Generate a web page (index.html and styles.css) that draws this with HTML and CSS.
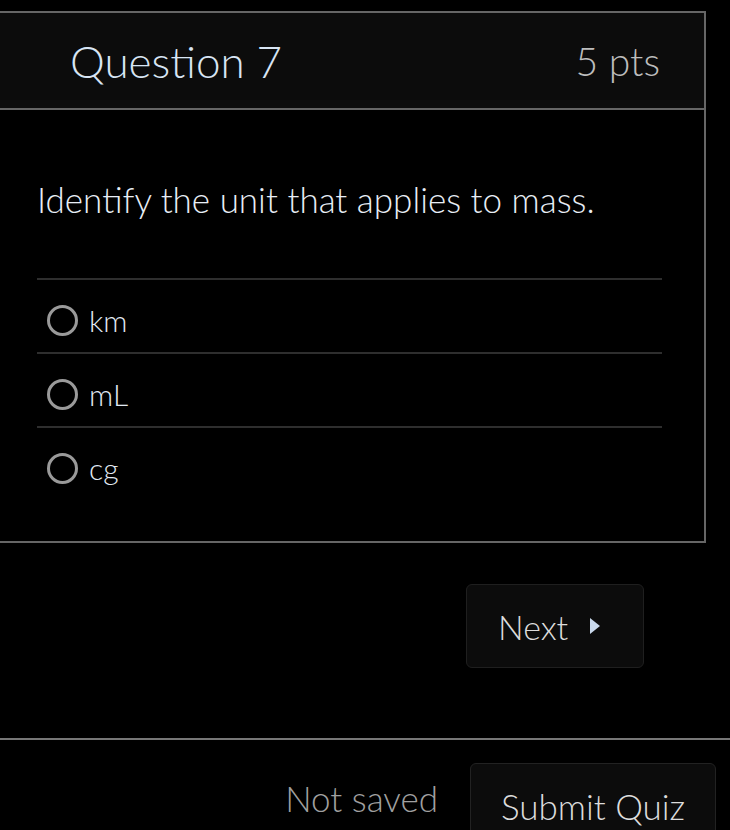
FILE: index.html
```html
<!DOCTYPE html>
<html lang="en">
<head>
<meta charset="utf-8">
<title>Question 7</title>
<link rel="stylesheet" href="styles.css">
</head>
<body>
<div class="card">
  <div class="card-header">
    <span class="title">Question 7</span>
    <span class="pts">5 pts</span>
  </div>
  <div class="card-body">
    <p class="question-text">Identify the unit that applies to mass.</p>
    <div class="answers">
      <label class="answer"><span class="radio"></span><span class="answer-text">km</span></label>
      <label class="answer"><span class="radio"></span><span class="answer-text">mL</span></label>
      <label class="answer"><span class="radio"></span><span class="answer-text">cg</span></label>
    </div>
  </div>
</div>
<div class="nav">
  <button class="next-btn"><span>Next</span><span class="tri"></span></button>
</div>
<div class="footer">
  <span class="status">Not saved</span>
  <button class="submit-btn">Submit Quiz</button>
</div>
</body>
</html>
```
FILE: styles.css
```css
html, body {
  margin: 0;
  padding: 0;
  background: #000;
  overflow: hidden;
  height: 830px;
}
body {
  font-family: "Lato Light", "Lato", "Liberation Sans", sans-serif;
  font-weight: 300;
}
.card {
  margin: 11px 24px 0 -2px;
  border: 2px solid #666;
}
.card-header {
  background: #0c0c0c;
  height: 95px;
  border-bottom: 2px solid #666;
  display: flex;
  align-items: center;
  justify-content: space-between;
  padding: 0 44px 0 70px;
}
.title {
  font-size: 44px;
  color: #d8e5f4;
}
.pts {
  font-size: 39px;
  color: #bdbdbd;
}
.card-body {
  padding: 68px 42px 41px 37px;
}
.question-text {
  margin: 0 0 58px;
  font-size: 35px;
  line-height: 42px;
  color: #e8eef6;
}
.answer {
  display: flex;
  align-items: center;
  border-top: 2px solid #2e2e2e;
  padding: 25px 0 16px 10px;
  gap: 11px;
}
.radio {
  width: 25px;
  height: 25px;
  border: 3px solid #9a9a9a;
  border-radius: 50%;
  flex: none;
}
.answer-text {
  font-size: 30px;
  color: #e2eaf3;
  line-height: 31px;
}
.nav {
  display: flex;
  justify-content: flex-end;
  padding: 41px 86px 0 0;
}
.next-btn {
  width: 178px;
  height: 84px;
  background: #0c0c0c;
  border: 1px solid #1f1f1f;
  border-radius: 6px;
  font-family: inherit;
  font-weight: 300;
  font-size: 34px;
  color: #dcdcdc;
  display: flex;
  align-items: center;
  padding: 0 0 0 31px;
  gap: 22px;
}
.tri {
  width: 0;
  height: 0;
  border-top: 8px solid transparent;
  border-bottom: 8px solid transparent;
  border-left: 10px solid #c9d9ec;
}
.footer {
  margin-top: 70px;
  border-top: 2px solid #777;
  display: flex;
  justify-content: flex-end;
  align-items: flex-start;
  padding: 23px 14px 0 0;
}
.status {
  font-size: 35px;
  color: #a0a0a0;
  margin: 14px 32px 0 0;
  white-space: nowrap;
}
.submit-btn {
  background: #0c0c0c;
  border: 1px solid #222;
  border-radius: 6px;
  font-family: inherit;
  font-weight: 300;
  font-size: 35px;
  color: #dcdcdc;
  padding: 15px 0 30px;
  height: 100px;
  width: 246px;
  white-space: nowrap;
  text-align: center;
}
```
